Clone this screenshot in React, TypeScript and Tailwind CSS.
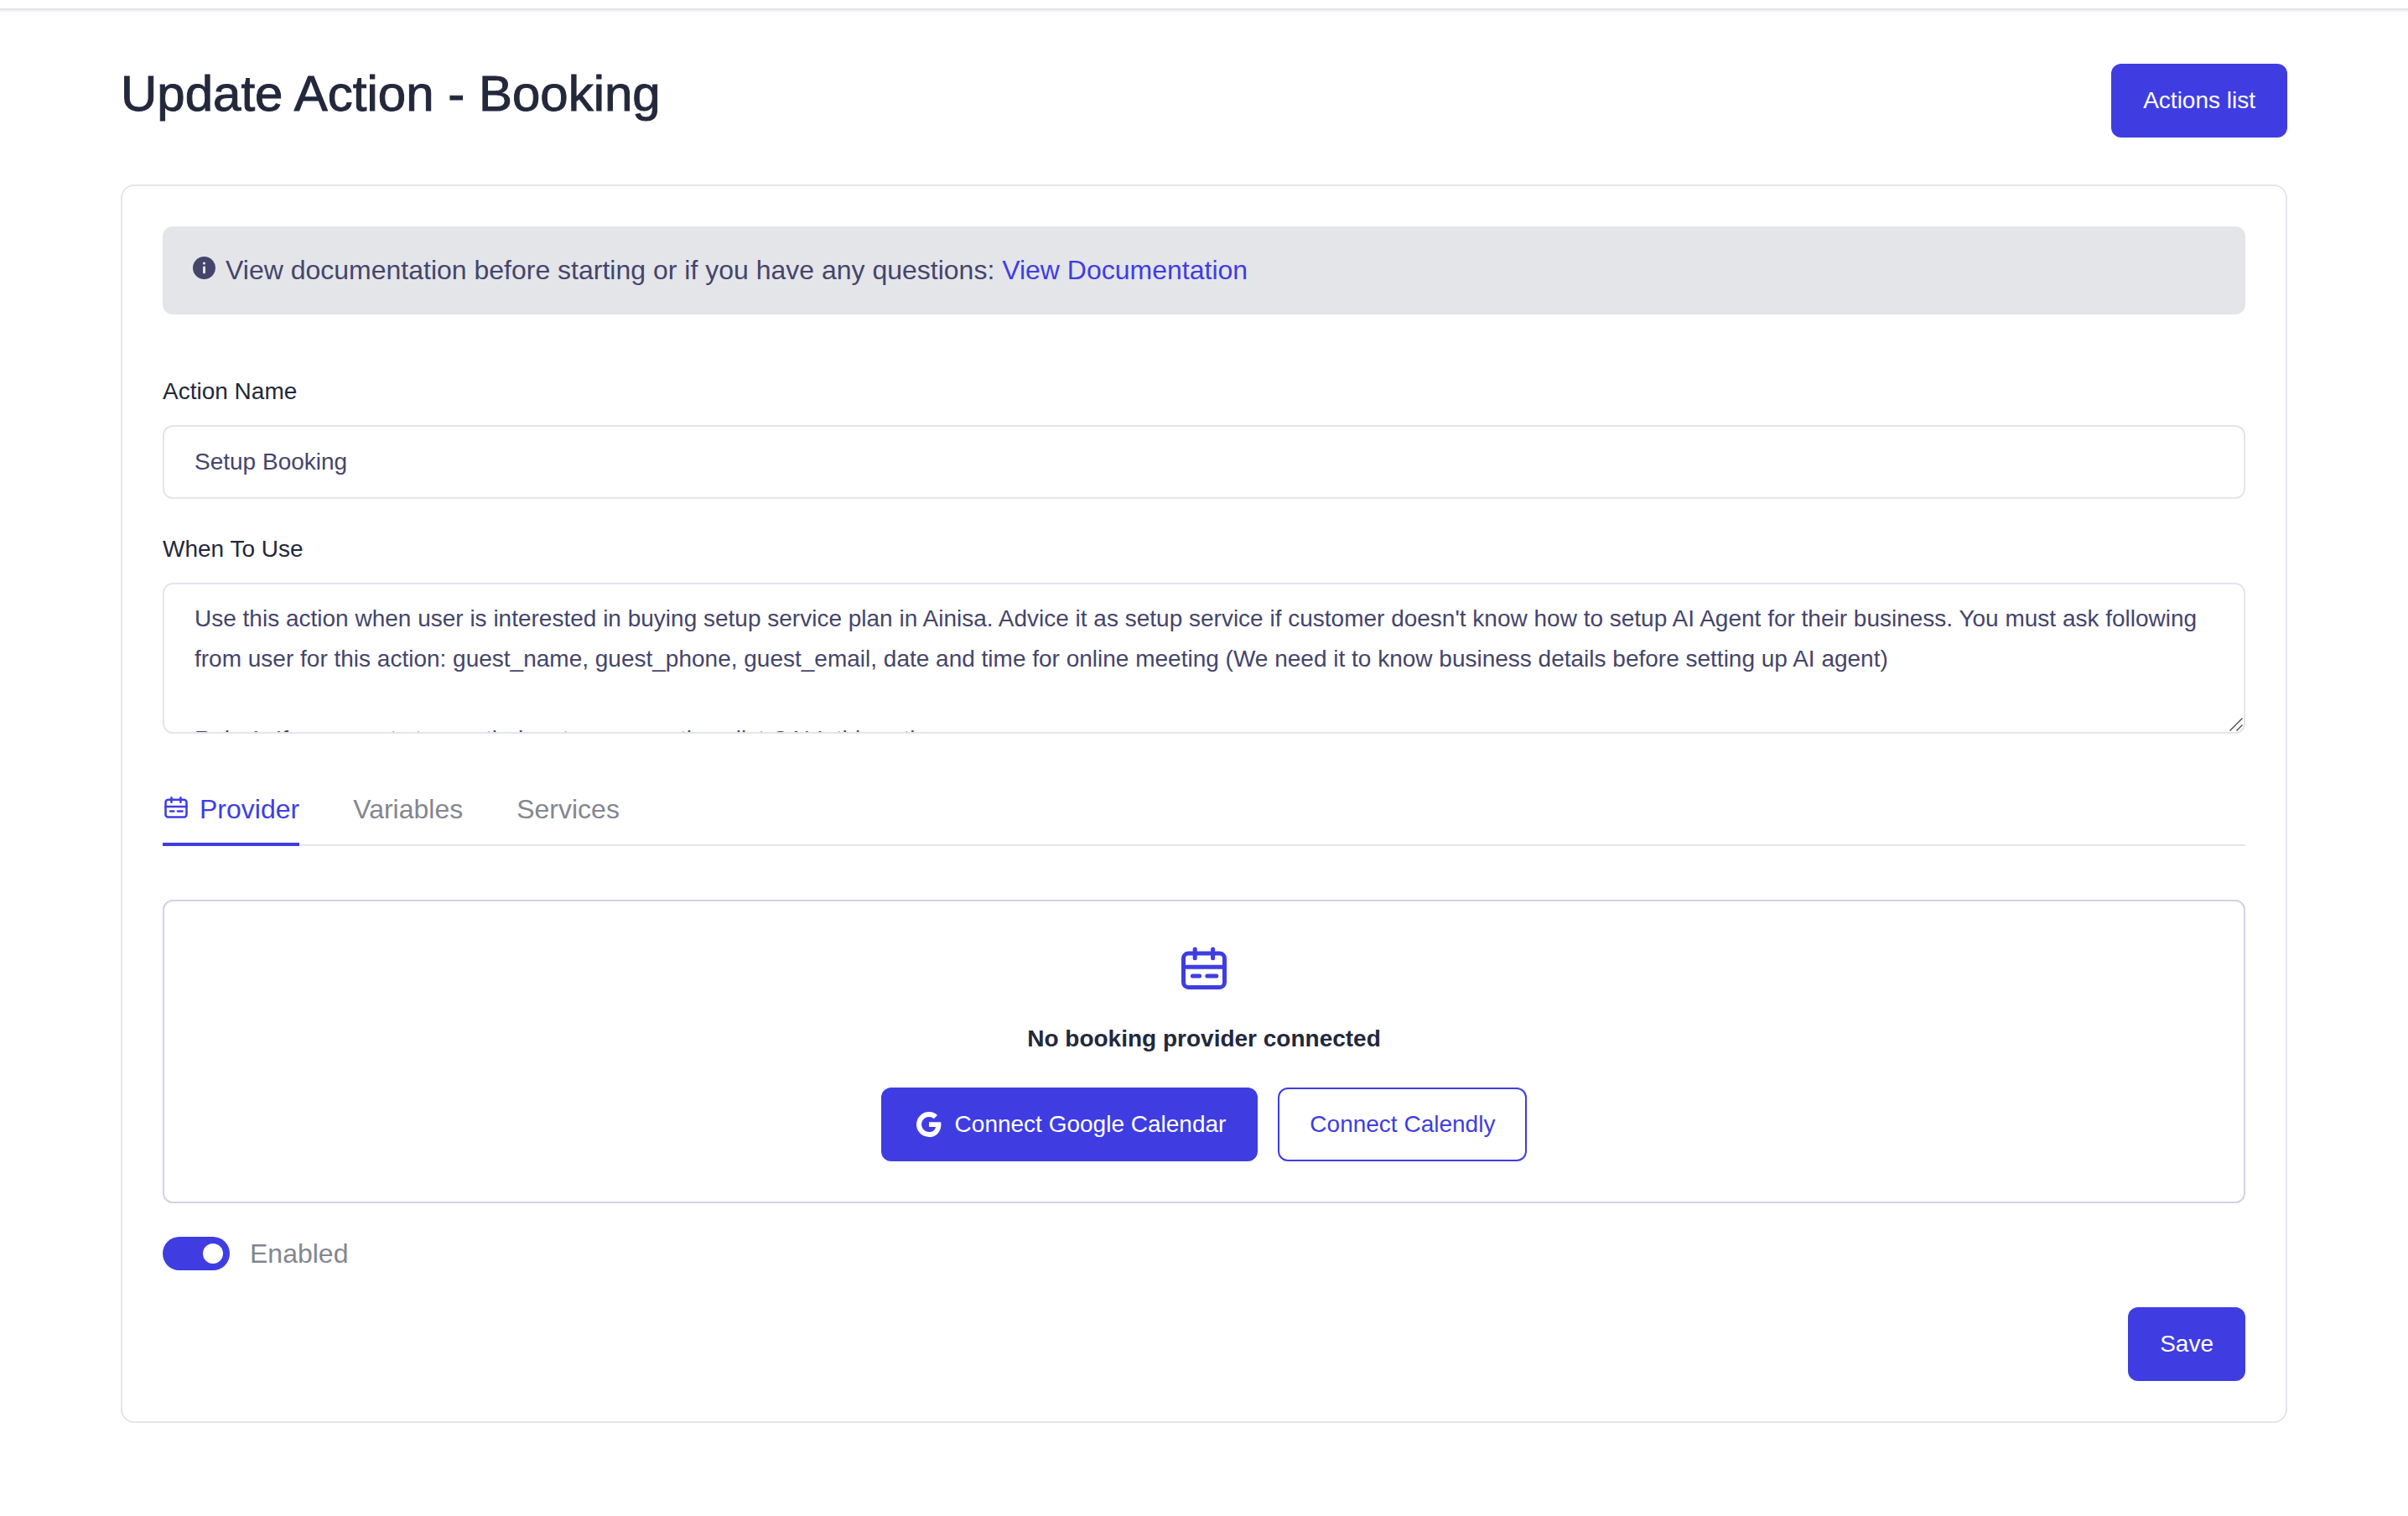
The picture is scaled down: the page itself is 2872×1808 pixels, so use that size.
import React, { useState } from 'react';
import { BsGoogle } from 'react-icons/bs';

const whenToUseText = `Use this action when user is interested in buying setup service plan in Ainisa. Advice it as setup service if customer doesn't know how to setup AI Agent for their business. You must ask following from user for this action: guest_name, guest_phone, guest_email, date and time for online meeting (We need it to know business details before setting up AI agent)

Rule 1: If user wants to see their setup reservations list CALL this action`;

const tabs = ['Provider', 'Variables', 'Services'];

const CalendarIcon = ({ className }: { className: string }) => (
  <svg className={className} viewBox="0 0 54 51" fill="none" stroke="currentColor" strokeWidth="5" strokeLinecap="round" aria-hidden="true">
    <rect x="2.5" y="7.5" width="49" height="40.5" rx="6" />
    <path d="M2.5 23.7h49M16.2 2.5v10.7M37.6 2.5v10.7M13.4 34.4h8.2M30.8 34.4h11" />
  </svg>
);

const InfoIcon = () => (
  <svg className="mb-1 h-[27px] w-[27px] shrink-0" viewBox="0 0 27 27" aria-hidden="true">
    <circle cx="13.5" cy="13.5" r="13.5" fill="#45456b" />
    <circle cx="13.5" cy="8" r="1.6" fill="#e4e5e9" />
    <rect x="12" y="11.5" width="3" height="8.7" rx="1.3" fill="#e4e5e9" />
  </svg>
);

function App() {
  const [name, setName] = useState('Setup Booking');
  const [whenToUse, setWhenToUse] = useState(whenToUseText);
  const [activeTab, setActiveTab] = useState('Provider');
  const [enabled, setEnabled] = useState(true);

  return (
    <div className="min-h-screen bg-white pt-[10px] font-['Liberation_Sans',Arial,sans-serif] text-[28px] leading-[48px] text-[#45456b]">
      <div className="h-1 border-t-2 border-[#e4e4eb] bg-[#f2f2f5]" />
      <div className="px-36 pt-[62px] pb-28">
        <div className="mb-14 flex items-start justify-between">
          <h1 className="text-[60px] leading-[72px] text-[#23283c] [-webkit-text-stroke:1px_#23283c]">Update Action - Booking</h1>
          <button type="button" className="h-[88px] rounded-xl bg-[#3f3de2] px-[38px] text-white">
            Actions list
          </button>
        </div>

        <div className="rounded-2xl border-2 border-[#e4e4eb] p-12">
          <div className="mb-[68px] flex h-[105px] items-center gap-3 rounded-xl bg-[#e4e5e9] px-9 pb-[2px] text-[32px]">
            <InfoIcon />
            <p>
              View documentation before starting or if you have any questions:{' '}
              <a href="#documentation" className="text-[#3f3de2]">View Documentation</a>
            </p>
          </div>

          <label htmlFor="action-name" className="mb-4 block text-[#23283c]">Action Name</label>
          <input
            id="action-name"
            type="text"
            className="mb-9 block h-[88px] w-full rounded-xl border-2 border-[#e4e4eb] px-9"
            value={name}
            onChange={(e) => setName(e.target.value)}
          />

          <label htmlFor="when-to-use" className="mb-4 block text-[#23283c]">When To Use</label>
          <div className="relative">
            <textarea
              id="when-to-use"
              className="block h-[180px] w-full resize-y overflow-hidden rounded-xl border-2 border-[#e4e4eb] px-9 pt-[17px] [&::-webkit-resizer]:bg-transparent"
              value={whenToUse}
              onChange={(e) => setWhenToUse(e.target.value)}
            />
            <svg className="pointer-events-none absolute right-[3px] bottom-[3px] h-4 w-4" viewBox="0 0 16 16" stroke="#4a4a4a" strokeWidth="1.4" aria-hidden="true">
              <path d="M0.5 15.5L15.5 0.5M8.5 15.5L15.5 8.5" />
            </svg>
          </div>

          <div role="tablist" className="mt-[66px] mb-16 flex gap-16 border-b-2 border-[#e4e4eb] text-[32px]">
            {tabs.map((tab) => (
              <button
                key={tab}
                type="button"
                role="tab"
                aria-selected={activeTab === tab}
                onClick={() => setActiveTab(tab)}
                className={
                  activeTab === tab
                    ? '-mb-[2px] flex items-center gap-3 border-b-4 border-[#3f3de2] pb-4 text-[#3f3de2]'
                    : '-mb-[2px] flex items-center gap-3 border-b-4 border-transparent pb-4 text-[#84868f]'
                }
              >
                {tab === 'Provider' && <CalendarIcon className="mx-[2px] mb-1 h-[26px] w-7" />}
                {tab}
              </button>
            ))}
          </div>

          <div className="mb-10 flex flex-col items-center rounded-xl border-2 border-[#d2d2e2] px-12 pt-[54px] pb-12">
            <CalendarIcon className="h-[52px] w-[54px] text-[#3f3de2]" />
            <h2 className="my-[34px] font-bold text-[#23283c]">No booking provider connected</h2>
            <div className="flex gap-6">
              <button type="button" className="flex h-[88px] items-center gap-4 rounded-xl bg-[#3f3de2] px-[38px] text-white">
                <BsGoogle className="ml-1 h-[30px] w-[30px]" />
                Connect Google Calendar
              </button>
              <button type="button" className="h-[88px] rounded-xl border-2 border-[#3f3de2] px-9 text-[#3f3de2]">
                Connect Calendly
              </button>
            </div>
          </div>

          <label className="flex h-10 items-center gap-6 text-[32px] text-[#84868f]">
            <input
              type="checkbox"
              role="switch"
              className="flex h-10 w-20 appearance-none items-center rounded-full bg-[#c8c8d4] px-2 before:h-6 before:w-6 before:rounded-full before:bg-white checked:justify-end checked:bg-[#3f3de2]"
              checked={enabled}
              onChange={(e) => setEnabled(e.target.checked)}
            />
            Enabled
          </label>

          <div className="mt-11 flex justify-end">
            <button type="submit" className="h-[88px] rounded-xl bg-[#3f3de2] px-[38px] text-white">
              Save
            </button>
          </div>
        </div>
      </div>
    </div>
  );
}

export default App;
